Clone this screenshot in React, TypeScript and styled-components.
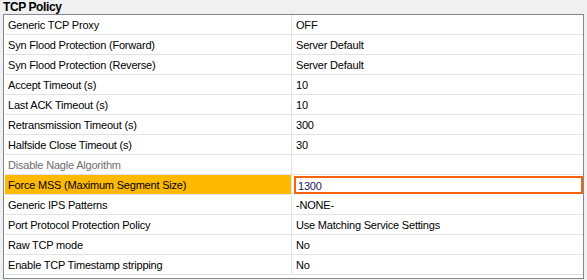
import styled, { createGlobalStyle } from 'styled-components';

const GlobalStyle = createGlobalStyle`
  html, body {
    margin: 0;
    padding: 0;
    background: #f0f0f0;
  }
  body {
    font-family: "Liberation Sans", Arial, sans-serif;
    font-size: 11px;
    letter-spacing: -0.2px;
    color: #000;
  }
`;

const Panel = styled.div`
  width: 587px;
  height: 280px;
  padding: 0 3px;
  box-sizing: border-box;
`;

const Title = styled.div`
  height: 14px;
  line-height: 14px;
  font-weight: bold;
  font-size: 12px;
  letter-spacing: -0.4px;
  color: #000;
`;

const Grid = styled.div`
  border: 1px solid #828790;
  background: #fff;
  padding: 0 1px 3px 1px;
  display: grid;
  grid-template-columns: 287px 291px;
`;

const Cell = styled.div<{ $highlight?: boolean; $muted?: boolean; $left?: boolean }>`
  height: 19px;
  line-height: 21px;
  border-bottom: 1px solid #e3e3e3;
  border-right: ${(p) => (p.$left ? '1px solid #e3e3e3' : 'none')};
  padding-left: ${(p) => (p.$left ? '3px' : '4px')};
  background: ${(p) => (p.$highlight ? '#ffb900' : 'transparent')};
  color: ${(p) => (p.$muted ? '#6d6d6d' : '#000')};
  white-space: nowrap;
  overflow: hidden;
`;

const EditCell = styled.div`
  height: 19px;
  border-bottom: 1px solid #e3e3e3;
  padding: 1px 0 0 2px;
  box-sizing: border-box;
`;

const Editor = styled.div`
  height: 18px;
  border: 2px solid #f7630c;
  box-sizing: border-box;
  line-height: 16px;
  padding-left: 2px;
  color: #1a1a5e;
  background: #fff;
  overflow: hidden;
`;

const rows: [string, string][] = [
  ['Generic TCP Proxy', 'OFF'],
  ['Syn Flood Protection (Forward)', 'Server Default'],
  ['Syn Flood Protection (Reverse)', 'Server Default'],
  ['Accept Timeout (s)', '10'],
  ['Last ACK Timeout (s)', '10'],
  ['Retransmission Timeout (s)', '300'],
  ['Halfside Close Timeout (s)', '30'],
  ['Disable Nagle Algorithm', ''],
  ['Force MSS (Maximum Segment Size)', '1300'],
  ['Generic IPS Patterns', '-NONE-'],
  ['Port Protocol Protection Policy', 'Use Matching Service Settings'],
  ['Raw TCP mode', 'No'],
  ['Enable TCP Timestamp stripping', 'No'],
];

export default function App() {
  return (
    <>
      <GlobalStyle />
      <Panel>
        <Title>TCP Policy</Title>
        <Grid>
          {rows.map(([name, value]) => {
            const editing = name.startsWith('Force MSS');
            return [
              <Cell
                key={name + '-n'}
                $left
                $highlight={editing}
                $muted={name === 'Disable Nagle Algorithm'}
              >
                {name}
              </Cell>,
              editing ? (
                <EditCell key={name + '-v'}>
                  <Editor>{value}</Editor>
                </EditCell>
              ) : (
                <Cell key={name + '-v'}>{value}</Cell>
              ),
            ];
          })}
        </Grid>
      </Panel>
    </>
  );
}
